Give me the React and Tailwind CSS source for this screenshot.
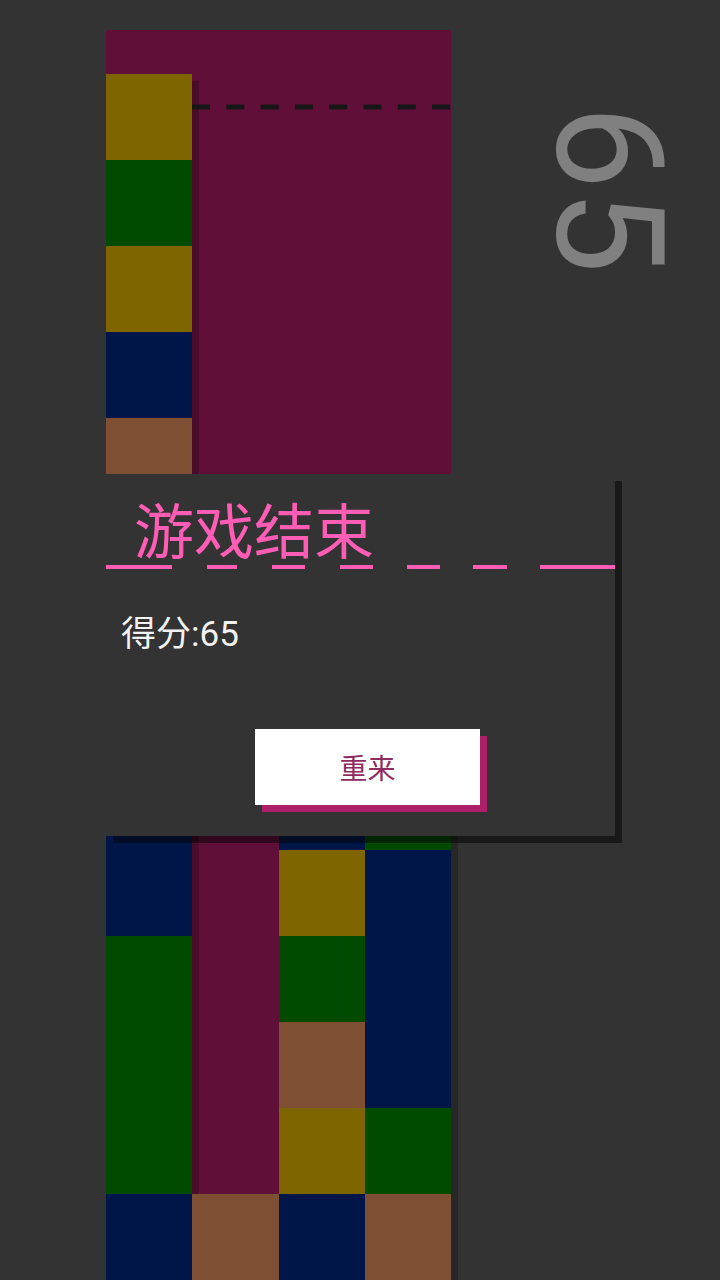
import React from "react";

// tile colours as they appear under the game-over dim
const C = {
  y: "bg-[#7f6500]",
  g: "bg-[#004b00]",
  n: "bg-[#001648]",
  b: "bg-[#7f4f33]",
};

const tileShadow = "shadow-[7px_7px_0_rgba(0,0,0,0.22)]";

function Tile({ color }) {
  if (!color) return <div className="h-[86px] w-full shrink-0" />;
  return <div className={`h-[86px] w-full shrink-0 ${C[color]} ${tileShadow}`} />;
}

function Column({ cells, offset }) {
  return (
    <div className="flex flex-col" style={{ marginTop: offset }}>
      {cells.map((c, i) => (
        <Tile key={i} color={c} />
      ))}
    </div>
  );
}

function DashedBlack() {
  return (
    <svg width="259" height="6" className="block">
      <line x1="0" y1="3" x2="259" y2="3" stroke="#161616" strokeWidth="5" strokeDasharray="18 16.3" />
    </svg>
  );
}

function PinkRule() {
  const dashes = [
    [0, 66],
    [101, 131],
    [166, 199],
    [234, 267],
    [301, 334],
    [367, 401],
    [434, 509],
  ];
  return (
    <svg width="509" height="4" className="block">
      {dashes.map(([a, b]) => (
        <rect key={a} x={a} y="0" width={b - a} height="4" fill="#ff5db5" />
      ))}
    </svg>
  );
}

export default function App() {
  const bottomCols = [
    ["n", "n", "g", "g", "g", "n"],
    [null, null, null, null, null, "b"],
    ["n", "y", "g", "b", "y", "n"],
    ["g", "n", "n", "n", "g", "b"],
  ];

  return (
    <div
      className="w-[720px] h-[1280px] overflow-hidden bg-[#333333] pt-[30px]"
      style={{ fontFamily: "Roboto, 'Noto Sans CJK SC', sans-serif" }}
    >
      {/* board (upper part) + current score */}
      <div className="flex">
        <div className="ml-[106px] w-[345px] h-[444px] shrink-0 overflow-y-clip bg-[#600f38] grid grid-cols-4">
          <Column cells={["y", "g", "y", "n", "b"]} offset={44} />
          <div className="col-span-3 pt-[74px]">
            <DashedBlack />
          </div>
        </div>
        <div className="ml-[73px] mt-[84px]">
          <div className="w-[168px] h-[150px] rotate-90 text-[150px] leading-none text-[#808080] font-['Roboto']">
            65
          </div>
        </div>
      </div>

      {/* game over dialog */}
      <div
        className="relative z-10 ml-[106px] w-[509px] h-[362px] bg-[#333333] shadow-[7px_7px_0_rgba(0,0,0,0.5)] flex flex-col"
        style={{ fontFamily: "'Noto Sans CJK SC', sans-serif" }}
      >
        <div className="pl-[28px] pt-[24px] text-[60px] leading-none text-[#ff5db5]">
          游戏结束
        </div>
        <div className="mt-[7px]">
          <PinkRule />
        </div>
        <div
          className="pl-[15px] mt-[48px] text-[35px] leading-none text-[#f2f2f2]"
          style={{ fontFamily: "Roboto, 'Noto Sans CJK SC', sans-serif" }}
        >
          得分:65
        </div>
        <button className="ml-[149px] mt-[77px] w-[225px] h-[76px] bg-white shadow-[7px_7px_0_#ad1f6b] text-[28px] leading-none text-[#8e2b60] flex items-center justify-center">
          重来
        </button>
      </div>

      {/* board (lower part) */}
      <div className="ml-[106px] w-[345px] h-[444px] overflow-y-clip bg-[#600f38] grid grid-cols-4">
        {bottomCols.map((cells, i) => (
          <Column key={i} cells={cells} offset={-72} />
        ))}
      </div>
    </div>
  );
}
